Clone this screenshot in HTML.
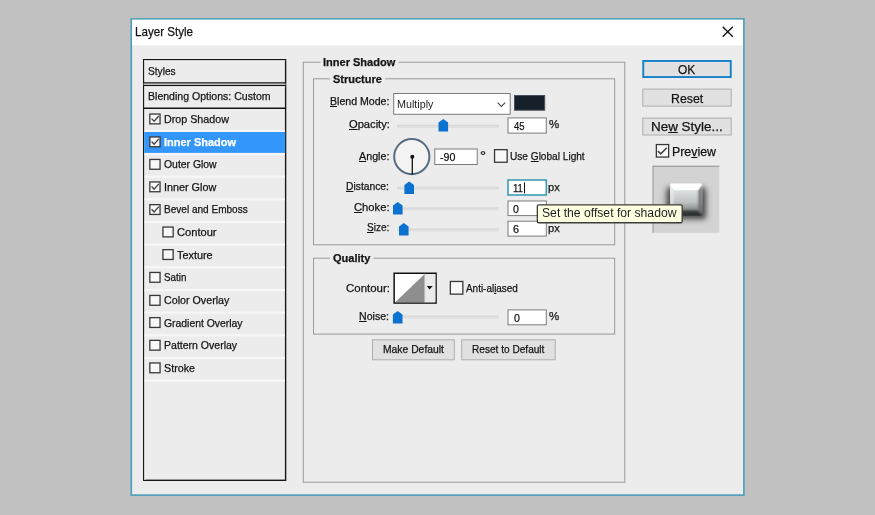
<!DOCTYPE html>
<html><head><meta charset="utf-8"><title>Layer Style</title>
<style>
*{box-sizing:border-box;margin:0;padding:0}
html,body{width:875px;height:515px;overflow:hidden;background:#c1c1c1;font-family:"Liberation Sans",sans-serif;font-size:11px;color:#141414}
.abs{position:absolute}
.t{position:absolute;white-space:nowrap;line-height:16px;height:16px;transform-origin:0 50%;color:#141414;-webkit-text-stroke:0.25px currentColor}
.t.thin{-webkit-text-stroke:0;color:#1e1e1e}
.t u{text-decoration:underline;text-underline-offset:1px}
</style></head><body>
<svg class="abs" style="left:0;top:0" width="875" height="515" viewBox="0 0 875 515"><rect x="131.30" y="18.90" width="612.60" height="476.20" fill="#ececec" stroke="#4a9eb8" stroke-width="1.6" />
<rect x="132.10" y="19.80" width="610.90" height="25.60" fill="#fff" />
<rect x="143.70" y="59.70" width="141.90" height="420.60" fill="none" stroke="#161616" stroke-width="1.4" />
<line x1="144.20" y1="60.90" x2="285.20" y2="60.90" stroke="#f6f6f6" stroke-width="1.0"/>
<line x1="144.90" y1="60.40" x2="144.90" y2="480.00" stroke="#f4f4f4" stroke-width="1.0"/>
<line x1="143.50" y1="84.10" x2="285.80" y2="84.10" stroke="#f6f6f6" stroke-width="1.2"/>
<line x1="143.50" y1="82.90" x2="285.80" y2="82.90" stroke="#161616" stroke-width="1.1"/>
<line x1="143.50" y1="85.50" x2="285.80" y2="85.50" stroke="#161616" stroke-width="1.5"/>
<line x1="144.20" y1="86.90" x2="285.20" y2="86.90" stroke="#f6f6f6" stroke-width="1.0"/>
<line x1="143.50" y1="108.20" x2="285.80" y2="108.20" stroke="#161616" stroke-width="1.4"/>
<rect x="144.60" y="130.17" width="140.40" height="2.20" fill="#f7f7f7" />
<rect x="144.60" y="152.84" width="140.40" height="2.20" fill="#f7f7f7" />
<rect x="144.60" y="175.51" width="140.40" height="2.20" fill="#f7f7f7" />
<rect x="144.60" y="198.18" width="140.40" height="2.20" fill="#f7f7f7" />
<rect x="144.60" y="220.85" width="140.40" height="2.20" fill="#f7f7f7" />
<rect x="144.60" y="243.52" width="140.40" height="2.20" fill="#f7f7f7" />
<rect x="144.60" y="266.19" width="140.40" height="2.20" fill="#f7f7f7" />
<rect x="144.60" y="288.86" width="140.40" height="2.20" fill="#f7f7f7" />
<rect x="144.60" y="311.53" width="140.40" height="2.20" fill="#f7f7f7" />
<rect x="144.60" y="334.20" width="140.40" height="2.20" fill="#f7f7f7" />
<rect x="144.60" y="356.87" width="140.40" height="2.20" fill="#f7f7f7" />
<rect x="144.60" y="379.54" width="140.40" height="2.20" fill="#f7f7f7" />
<rect x="144.20" y="132.00" width="141.00" height="20.90" fill="#3396fb" />
<rect x="149.85" y="114.05" width="10.20" height="9.80" fill="#f8f8f8" stroke="#383838" stroke-width="1.3" />
<path d="M151.60 118.60 L154.10 121.30 L158.80 116.00" fill="none" stroke="#444" stroke-width="1.35"/>
<rect x="149.85" y="136.95" width="10.20" height="9.80" fill="#f8f8f8" stroke="#383838" stroke-width="1.3" />
<path d="M151.60 141.50 L154.10 144.20 L158.80 138.90" fill="none" stroke="#444" stroke-width="1.35"/>
<rect x="149.85" y="159.45" width="10.20" height="9.80" fill="#f8f8f8" stroke="#383838" stroke-width="1.3" />
<rect x="149.85" y="181.95" width="10.20" height="9.80" fill="#f8f8f8" stroke="#383838" stroke-width="1.3" />
<path d="M151.60 186.50 L154.10 189.20 L158.80 183.90" fill="none" stroke="#444" stroke-width="1.35"/>
<rect x="149.85" y="204.65" width="10.20" height="9.80" fill="#f8f8f8" stroke="#383838" stroke-width="1.3" />
<path d="M151.60 209.20 L154.10 211.90 L158.80 206.60" fill="none" stroke="#444" stroke-width="1.35"/>
<rect x="149.85" y="272.45" width="10.20" height="9.80" fill="#f8f8f8" stroke="#383838" stroke-width="1.3" />
<rect x="149.85" y="295.45" width="10.20" height="9.80" fill="#f8f8f8" stroke="#383838" stroke-width="1.3" />
<rect x="149.85" y="317.65" width="10.20" height="9.80" fill="#f8f8f8" stroke="#383838" stroke-width="1.3" />
<rect x="149.85" y="340.35" width="10.20" height="9.80" fill="#f8f8f8" stroke="#383838" stroke-width="1.3" />
<rect x="149.85" y="362.95" width="10.20" height="9.80" fill="#f8f8f8" stroke="#383838" stroke-width="1.3" />
<rect x="162.95" y="227.05" width="10.20" height="9.80" fill="#f8f8f8" stroke="#383838" stroke-width="1.3" />
<rect x="162.95" y="249.65" width="10.20" height="9.80" fill="#f8f8f8" stroke="#383838" stroke-width="1.3" />
<rect x="303.30" y="62.20" width="321.50" height="420.00" fill="none" stroke="#9a9a9a" stroke-width="1" />
<rect x="313.50" y="78.80" width="301.20" height="166.00" fill="none" stroke="#9a9a9a" stroke-width="1" />
<rect x="313.50" y="258.20" width="301.20" height="75.90" fill="none" stroke="#9a9a9a" stroke-width="1" />
<rect x="320.50" y="56.00" width="78.00" height="14.00" fill="#ececec" />
<rect x="330.00" y="72.00" width="55.00" height="14.00" fill="#ececec" />
<rect x="330.00" y="251.00" width="43.50" height="14.00" fill="#ececec" />
<rect x="393.70" y="93.50" width="116.50" height="20.80" fill="#fff" stroke="#7a7a7a" stroke-width="1" />
<path d="M497.6 102.7 L501.4 106.5 L505.2 102.7" fill="none" stroke="#4a4a4a" stroke-width="1.15"/>
<rect x="514.50" y="95.50" width="30.20" height="14.70" fill="#16202a" stroke="#4a5158" stroke-width="1" />
<rect x="397.00" y="124.90" width="102.00" height="3.00" fill="#dfdfdf" />
<line x1="397.00" y1="125.30" x2="499.00" y2="125.30" stroke="#d6d6d6" stroke-width="0.8"/>
<path d="M443.30 119.00 L448.10 122.60 L448.10 131.50 L438.50 131.50 L438.50 122.60 Z" fill="#0b72cf"/>
<rect x="508.00" y="117.90" width="38.30" height="15.20" fill="#fff" stroke="#7b7b7b" stroke-width="1" />
<circle cx="411.8" cy="156.6" r="17.6" fill="#f3f3f3" stroke="#566c83" stroke-width="2.0"/>
<line x1="412.30" y1="156.80" x2="412.30" y2="174.60" stroke="#111" stroke-width="1.3"/>
<circle cx="412.3" cy="156.8" r="2.0" fill="#111"/>
<rect x="434.80" y="149.00" width="42.40" height="15.50" fill="#fff" stroke="#7b7b7b" stroke-width="1" />
<rect x="494.55" y="149.65" width="12.60" height="12.60" fill="#f8f8f8" stroke="#383838" stroke-width="1.3" />
<rect x="397.00" y="186.80" width="102.00" height="3.00" fill="#dfdfdf" />
<line x1="397.00" y1="187.20" x2="499.00" y2="187.20" stroke="#d6d6d6" stroke-width="0.8"/>
<path d="M409.20 181.50 L414.00 185.10 L414.00 194.00 L404.40 194.00 L404.40 185.10 Z" fill="#0b72cf"/>
<rect x="508.00" y="180.00" width="38.30" height="15.00" fill="#fff" stroke="#3f9bb6" stroke-width="1.6" />
<line x1="524.50" y1="182.40" x2="524.50" y2="193.40" stroke="#111" stroke-width="1"/>
<rect x="397.00" y="207.50" width="102.00" height="3.00" fill="#dfdfdf" />
<line x1="397.00" y1="207.90" x2="499.00" y2="207.90" stroke="#d6d6d6" stroke-width="0.8"/>
<path d="M397.80 201.90 L402.60 205.50 L402.60 214.40 L393.00 214.40 L393.00 205.50 Z" fill="#0b72cf"/>
<rect x="508.00" y="201.00" width="38.30" height="14.60" fill="#fff" stroke="#7b7b7b" stroke-width="1" />
<rect x="397.00" y="228.50" width="102.00" height="3.00" fill="#dfdfdf" />
<line x1="397.00" y1="228.90" x2="499.00" y2="228.90" stroke="#d6d6d6" stroke-width="0.8"/>
<path d="M403.80 222.90 L408.60 226.50 L408.60 235.40 L399.00 235.40 L399.00 226.50 Z" fill="#0b72cf"/>
<rect x="508.00" y="221.20" width="38.30" height="14.90" fill="#fff" stroke="#7b7b7b" stroke-width="1" />
<rect x="394.15" y="273.25" width="41.90" height="29.80" fill="#fff" stroke="#111" stroke-width="1.5" />
<path d="M395.2 302.2 L424.4 274.3 L424.4 302.2 Z" fill="#8e8e8e"/>
<rect x="424.70" y="274.00" width="10.70" height="28.30" fill="#ebebeb" />
<line x1="424.60" y1="273.50" x2="424.60" y2="302.80" stroke="#9a9a9a" stroke-width="0.6"/>
<path d="M426.8 286.0 L432.6 286.0 L429.7 289.4 Z" fill="#111"/>
<rect x="450.35" y="281.45" width="12.50" height="12.70" fill="#f8f8f8" stroke="#383838" stroke-width="1.3" />
<rect x="397.00" y="315.70" width="102.00" height="3.00" fill="#dfdfdf" />
<line x1="397.00" y1="316.10" x2="499.00" y2="316.10" stroke="#d6d6d6" stroke-width="0.8"/>
<path d="M397.70 310.90 L402.50 314.50 L402.50 323.40 L392.90 323.40 L392.90 314.50 Z" fill="#0b72cf"/>
<rect x="508.00" y="309.90" width="38.30" height="14.90" fill="#fff" stroke="#7b7b7b" stroke-width="1" />
<rect x="372.50" y="339.80" width="81.80" height="20.00" fill="#e1e1e1" stroke="#adadad" stroke-width="1" />
<rect x="461.70" y="339.80" width="93.50" height="20.00" fill="#e1e1e1" stroke="#adadad" stroke-width="1" />
<rect x="643.25" y="60.95" width="87.50" height="16.10" fill="#e1e1e1" stroke="#1380c8" stroke-width="1.9" />
<rect x="642.80" y="89.10" width="88.40" height="17.00" fill="#e1e1e1" stroke="#adadad" stroke-width="1" />
<rect x="642.80" y="118.10" width="88.40" height="16.90" fill="#e1e1e1" stroke="#adadad" stroke-width="1" />
<rect x="656.35" y="144.55" width="12.30" height="12.50" fill="#f8f8f8" stroke="#383838" stroke-width="1.3" />
<path d="M657.90 151.10 L660.75 153.80 L666.80 147.80" fill="none" stroke="#444" stroke-width="1.60"/>
<path d="M722.7 26.700 L732.8 36.800 M732.8 26.700 L722.7 36.800" stroke="#111" stroke-width="1.35" fill="none"/></svg>
<svg class="abs" style="left:0;top:0" width="875" height="515" viewBox="0 0 875 515">
<defs>
<filter id="bl" x="-50%" y="-50%" width="200%" height="200%"><feGaussianBlur stdDeviation="3.3"/></filter>
<filter id="bm" x="-50%" y="-50%" width="200%" height="200%"><feGaussianBlur stdDeviation="2.2"/></filter>
<filter id="b2" x="-20%" y="-20%" width="140%" height="140%"><feGaussianBlur stdDeviation="0.55"/></filter>
<filter id="b4" x="-20%" y="-20%" width="140%" height="140%"><feGaussianBlur stdDeviation="0.45"/></filter>
<filter id="b3" x="-20%" y="-20%" width="140%" height="140%"><feGaussianBlur stdDeviation="0.9"/></filter>
<linearGradient id="sq" x1="0" y1="0" x2="0" y2="1"><stop offset="0" stop-color="#eceeee"/><stop offset="0.3" stop-color="#d6d9d9"/><stop offset="0.55" stop-color="#c2c5c5"/><stop offset="0.78" stop-color="#8b8e8e"/><stop offset="0.92" stop-color="#4a4c4c"/><stop offset="1" stop-color="#2c2e2e"/></linearGradient>
<clipPath id="pvc"><rect x="652.8" y="166.0" width="66.4" height="66.8"/></clipPath>
<clipPath id="sqc"><rect x="670.0" y="183.5" width="32.3" height="32.2" rx="1.6"/></clipPath>
</defs>
<rect x="652.8" y="166.0" width="66.4" height="66.8" fill="#d3d3d3"/>
<g clip-path="url(#pvc)">
<rect x="666.0" y="189" width="40.4" height="30" fill="#2a2a2a" opacity="0.55" filter="url(#bl)"/>
<rect x="667.6" y="187" width="37.2" height="31.5" fill="#222" opacity="0.5" filter="url(#bm)"/>
<g filter="url(#b4)"><g clip-path="url(#sqc)">
<rect x="669" y="183" width="35" height="34" fill="url(#sq)"/>
<g filter="url(#b3)">
<path d="M702.6 183 L698.2 190.500 L698.2 210.500 L702.6 216 Z" fill="#6c6e6e" opacity="0.85"/>
<path d="M669.8 183 L673.6 190.500 L673.6 210.500 L669.8 216 Z" fill="#f2f4f4" opacity="0.55"/>
<path d="M669.5 216.3 L673.6 210.5 L698.2 210.500 L702.8 216.3 Z" fill="#242626" opacity="0.75"/>
</g>
<g filter="url(#b2)">
<path d="M668.5 182.5 L703.8 182.5 L698.0 190.2 L674.2 190.2 Z" fill="#ffffff"/>
</g>
</g></g>
</g>
<line x1="652.5" y1="166.2" x2="719.4" y2="166.2" stroke="#8e8e8e" stroke-width="1"/>
<line x1="653.0" y1="166" x2="653.0" y2="232.8" stroke="#9a9a9a" stroke-width="1"/>
</svg>
<svg class="abs" style="left:0;top:0" width="875" height="515" viewBox="0 0 875 515"><rect x="537.35" y="204.85" width="144.80" height="17.90" fill="#ffffe1" stroke="#3c3c3c" stroke-width="1.3" rx="1.2"/></svg>
<span class="t" style="left:134.8px;top:23.9px;font-size:12.7px;transform:scaleX(0.915);">Layer Style</span>
<span class="t" style="left:147.7px;top:62.7px;font-size:11px;transform:scaleX(0.923);">Styles</span>
<span class="t" style="left:147.9px;top:88.0px;font-size:11px;transform:scaleX(0.959);">Blending Options: Custom</span>
<span class="t" style="left:163.7px;top:110.6px;font-size:11px;transform:scaleX(0.974);">Drop Shadow</span>
<span class="t" style="left:163.9px;top:133.5px;font-size:11px;transform:scaleX(0.998);font-weight:bold;color:#fff;">Inner Shadow</span>
<span class="t" style="left:164.1px;top:156.0px;font-size:11px;transform:scaleX(0.946);">Outer Glow</span>
<span class="t" style="left:163.6px;top:178.5px;font-size:11px;transform:scaleX(0.982);">Inner Glow</span>
<span class="t" style="left:163.8px;top:201.2px;font-size:11px;transform:scaleX(0.913);">Bevel and Emboss</span>
<span class="t" style="left:176.7px;top:223.5px;font-size:11px;transform:scaleX(1.011);">Contour</span>
<span class="t" style="left:177.0px;top:246.6px;font-size:11px;transform:scaleX(0.987);">Texture</span>
<span class="t" style="left:164.2px;top:269.2px;font-size:11px;transform:scaleX(0.893);">Satin</span>
<span class="t" style="left:164.1px;top:292.4px;font-size:11px;transform:scaleX(0.972);">Color Overlay</span>
<span class="t" style="left:164.1px;top:315.0px;font-size:11px;transform:scaleX(0.945);">Gradient Overlay</span>
<span class="t" style="left:163.7px;top:337.4px;font-size:11px;transform:scaleX(0.957);">Pattern Overlay</span>
<span class="t" style="left:164.1px;top:359.6px;font-size:11px;transform:scaleX(0.975);">Stroke</span>
<span class="t" style="left:323.0px;top:54.1px;font-size:11px;transform:scaleX(1.001);font-weight:bold;">Inner Shadow</span>
<span class="t" style="left:333.1px;top:70.5px;font-size:11px;transform:scaleX(0.998);font-weight:bold;">Structure</span>
<span class="t" style="left:333.0px;top:250.2px;font-size:11px;transform:scaleX(1.001);font-weight:bold;">Quality</span>
<span class="t" style="left:330.1px;top:92.5px;font-size:11px;transform:scaleX(0.962);"><u>B</u>lend Mode:</span>
<span class="t" style="left:348.5px;top:115.8px;font-size:11px;transform:scaleX(1.013);"><u>O</u>pacity:</span>
<span class="t" style="left:358.8px;top:148.2px;font-size:11px;transform:scaleX(0.976);"><u>A</u>ngle:</span>
<span class="t" style="left:346.3px;top:177.7px;font-size:11px;transform:scaleX(0.936);"><u>D</u>istance:</span>
<span class="t" style="left:353.8px;top:198.7px;font-size:11px;transform:scaleX(1.018);"><u>C</u>hoke:</span>
<span class="t" style="left:366.8px;top:219.0px;font-size:11px;transform:scaleX(0.913);"><u>S</u>ize:</span>
<span class="t" style="left:345.5px;top:279.7px;font-size:11px;transform:scaleX(1.041);">Contour:</span>
<span class="t" style="left:359.3px;top:307.8px;font-size:11px;transform:scaleX(0.962);"><u>N</u>oise:</span>
<span class="t thin" style="left:396.9px;top:96.4px;font-size:11.5px;transform:scaleX(0.934);">Multiply</span>
<span class="t" style="left:513.8px;top:118.2px;font-size:11px;transform:scaleX(0.861);">45</span>
<span class="t" style="left:548.9px;top:115.6px;font-size:11px;transform:scaleX(1.044);">%</span>
<span class="t" style="left:440.3px;top:149.2px;font-size:11px;transform:scaleX(0.968);">-90</span>
<span class="t" style="left:479.8px;top:147.4px;font-size:11px;transform:scaleX(1.375);">°</span>
<span class="t" style="left:509.7px;top:147.9px;font-size:11px;transform:scaleX(0.918);">Use <u>G</u>lobal Light</span>
<span class="t" style="left:512.9px;top:180.1px;font-size:11px;transform:scaleX(0.871);">11</span>
<span class="t" style="left:548.2px;top:178.9px;font-size:11px;transform:scaleX(1.017);">px</span>
<span class="t" style="left:513.4px;top:200.8px;font-size:11px;transform:scaleX(0.962);">0</span>
<span class="t" style="left:513.3px;top:221.4px;font-size:11px;transform:scaleX(0.981);">6</span>
<span class="t" style="left:548.2px;top:219.9px;font-size:11px;transform:scaleX(1.017);">px</span>
<span class="t" style="left:466.1px;top:279.7px;font-size:11px;transform:scaleX(0.902);">Anti-al<u>i</u>ased</span>
<span class="t" style="left:513.5px;top:309.6px;font-size:11px;transform:scaleX(0.962);">0</span>
<span class="t" style="left:549.1px;top:307.5px;font-size:11px;transform:scaleX(1.044);">%</span>
<span class="t" style="left:382.5px;top:341.4px;font-size:11px;transform:scaleX(0.940);">Make Default</span>
<span class="t" style="left:472.0px;top:341.4px;font-size:11px;transform:scaleX(0.918);">Reset to Default</span>
<span class="t" style="left:678.0px;top:61.9px;font-size:12px;transform:scaleX(0.998);">OK</span>
<span class="t" style="left:670.5px;top:90.5px;font-size:12px;transform:scaleX(1.026);">Reset</span>
<span class="t" style="left:650.9px;top:119.1px;font-size:12px;transform:scaleX(1.119);">Ne<u>w</u> Style...</span>
<span class="t" style="left:672.1px;top:143.8px;font-size:12.3px;transform:scaleX(1.006);">Pre<u>v</u>iew</span>
<span class="t thin" style="left:541.8px;top:204.6px;font-size:12.5px;transform:scaleX(0.974);">Set the offset for shadow</span>
</body></html>
